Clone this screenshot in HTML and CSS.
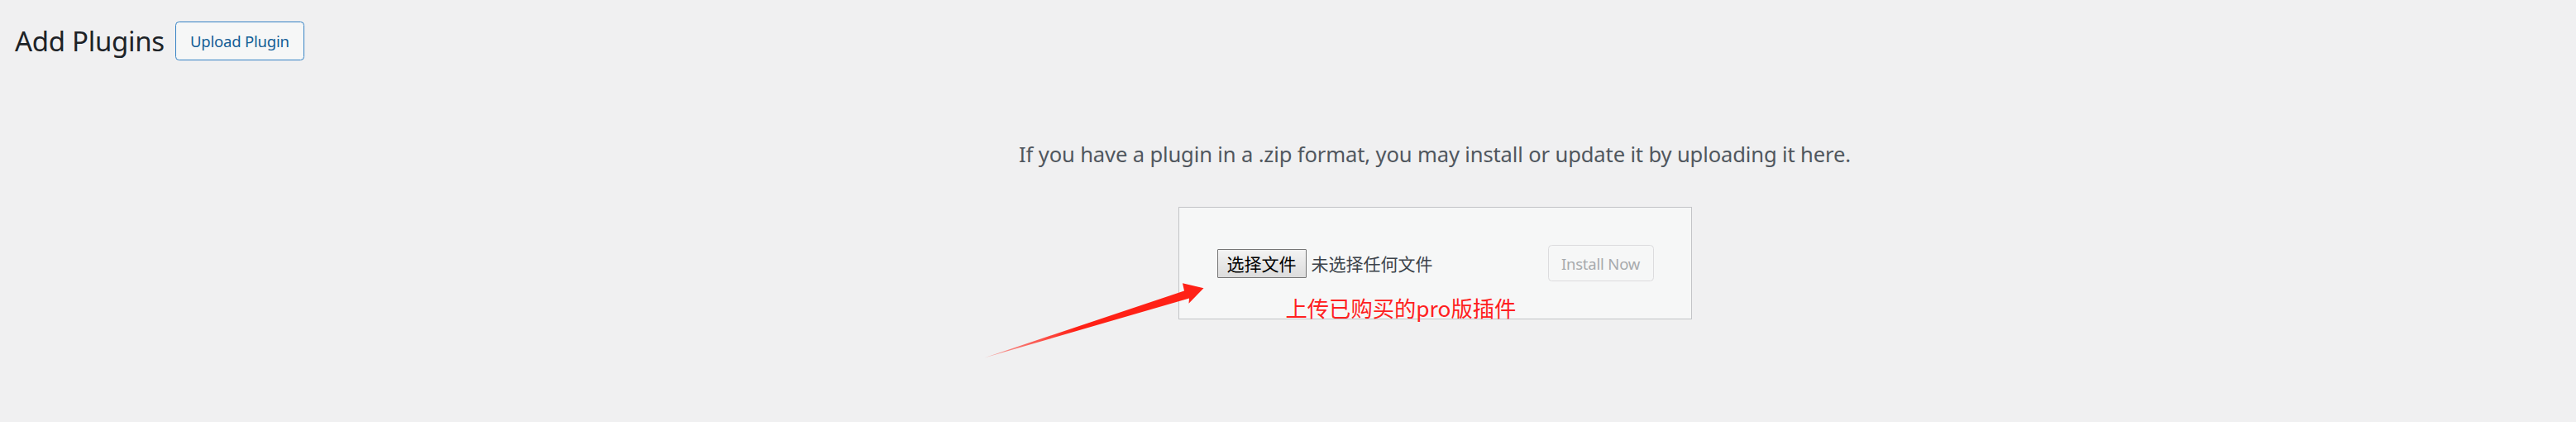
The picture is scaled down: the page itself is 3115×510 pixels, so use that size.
FILE: index.html
```html
<!DOCTYPE html>
<html lang="en">
<head>
<meta charset="utf-8">
<title>Add Plugins</title>
<link rel="stylesheet" href="styles.css">
</head>
<body>
<div class="wrap">
  <div class="page-head">
    <h1 class="page-title">Add Plugins</h1>
    <a class="title-action" href="#">Upload Plugin</a>
  </div>
  <div class="upload-plugin">
    <p class="install-help">If you have a plugin in a .zip format, you may install or update it by uploading it here.</p>
    <form class="upload-form">
      <div class="file-field">
        <span class="file-button">选择文件</span>
        <span class="file-name">未选择任何文件</span>
      </div>
      <span class="install-button">Install Now</span>
      <span class="note">上传已购买的pro版插件</span>
    </form>
  </div>
</div>
<svg class="arrow" width="3115" height="510" viewBox="0 0 3115 510" aria-hidden="true">
  <defs>
    <linearGradient id="fade" x1="1190" y1="432" x2="1300" y2="395" gradientUnits="userSpaceOnUse">
      <stop offset="0" stop-color="#ff2116" stop-opacity="0.35"/>
      <stop offset="1" stop-color="#ff2116" stop-opacity="1"/>
    </linearGradient>
  </defs>
  <polygon fill="url(#fade)" points="1190,432.5 1432,351.5 1430,342.3 1455.5,348.3 1437.5,366.7 1438,360.5"/>
</svg>
</body>
</html>
```
FILE: styles.css
```css
html, body {
  margin: 0;
  padding: 0;
}
body {
  background: #f0f0f1;
  width: 3115px;
  height: 510px;
  overflow: hidden;
  position: relative;
  font-family: "Noto Sans", "Open Sans", sans-serif;
}
.wrap {
  padding: 26px 0 0 18px;
}
.page-head {
  display: flex;
  align-items: center;
  gap: 13px;
}
.page-title {
  margin: 0;
  font-size: 33px;
  font-weight: 400;
  color: #1d2327;
  line-height: 47px;
  letter-spacing: -0.3px;
}
.title-action {
  box-sizing: border-box;
  display: inline-flex;
  align-items: center;
  justify-content: center;
  width: 156px;
  height: 47px;
  border: 1.5px solid #3582c4;
  border-radius: 4.5px;
  background: #f6f7f7;
  color: #135e96;
  font-size: 18.5px;
  text-decoration: none;
  letter-spacing: -0.2px;
}
.upload-plugin {
  margin-left: 337px;
  text-align: center;
}
.install-help {
  margin: 94px 0 0;
  font-size: 25.6px;
  line-height: 40px;
  color: #50575e;
  letter-spacing: -0.15px;
}
.upload-form {
  position: relative;
  display: inline-flex;
  justify-content: space-between;
  align-items: center;
  margin: 43px 0 0;
  padding: 45px;
  background: #f6f7f7;
  border: 1px solid #c3c4c7;
  text-align: left;
}
.file-field {
  display: flex;
  align-items: center;
  width: 401px;
  gap: 6px;
}
.file-button {
  box-sizing: border-box;
  display: inline-flex;
  align-items: center;
  justify-content: center;
  width: 108px;
  height: 35px;
  margin-left: 1px;
  border: 1.5px solid #767676;
  border-radius: 1px;
  background: linear-gradient(#f3f3f3, #dcdcdc);
  color: #000;
  font-family: "Noto Sans CJK SC", sans-serif;
  font-size: 21px;
}
.file-name {
  color: #3c434a;
  font-family: "Noto Sans CJK SC", sans-serif;
  font-size: 21px;
}
.install-button {
  box-sizing: border-box;
  display: inline-flex;
  align-items: center;
  justify-content: center;
  width: 128px;
  height: 44px;
  border: 1.5px solid #dcdcde;
  border-radius: 4.5px;
  background: #f6f7f7;
  color: #a7aaad;
  font-size: 18.5px;
  letter-spacing: -0.2px;
}
.note {
  position: absolute;
  left: 129px;
  top: 108px;
  font-family: "Noto Sans CJK SC", sans-serif;
  font-size: 26.3px;
  line-height: 1;
  color: #ff2020;
  white-space: nowrap;
}
.arrow {
  position: absolute;
  left: 0;
  top: 0;
  pointer-events: none;
}
```
